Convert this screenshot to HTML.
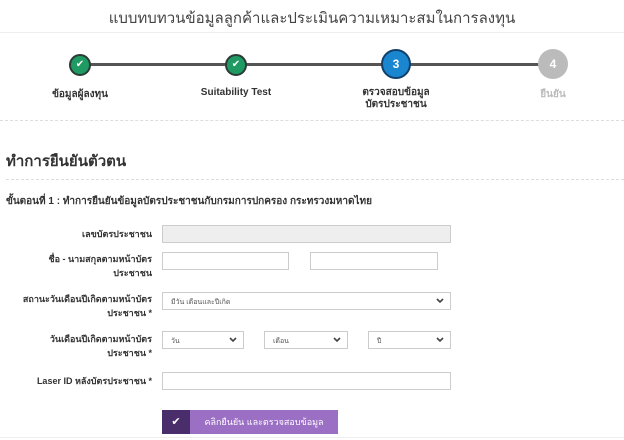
<!DOCTYPE html>
<html><head><meta charset="utf-8"><style>
*{box-sizing:border-box;margin:0;padding:0}
body{width:624px;height:440px;background:#fff;font-family:"Liberation Sans","DejaVu Sans",sans-serif;color:#333;position:relative;overflow:hidden}
.a{position:absolute}
.title{top:6px;left:0;width:624px;text-align:center;font-size:15px;color:#444}
.hdr{top:32px;left:0;width:624px;border-top:1px solid #eee}
.line{top:63px;left:80px;width:473px;height:3px;background:#555}
.c{border-radius:50%;color:#fff;font-weight:bold;text-align:center}
.lbl{font-size:9px;font-weight:bold;text-align:center;width:120px}
.dot{left:0;width:624px;border-top:1px dashed #ddd}
.fl{font-size:9px;font-weight:bold;text-align:right;width:140px;left:12px;line-height:14px}
.in{border:1px solid #ccc;background:#fff;height:18px}
.sel{font-size:7px;color:#555;padding:4px 8px}
.sel svg{position:absolute;right:6px;top:5px}
</style></head><body>
<div class="a title">แบบทบทวนข้อมูลลูกค้าและประเมินความเหมาะสมในการลงทุน</div>
<div class="a hdr"></div>
<div class="a line"></div>
<div class="a c" style="left:69px;top:54px;width:22px;height:22px;background:#1f9a63;border:2px solid #2b3b36;font-size:10px;line-height:18px">✔</div>
<div class="a c" style="left:225px;top:54px;width:22px;height:22px;background:#1f9a63;border:2px solid #2b3b36;font-size:10px;line-height:18px">✔</div>
<div class="a c" style="left:381px;top:49px;width:30px;height:30px;background:#1a86d0;border:2px solid #11406a;font-size:12px;line-height:26px">3</div>
<div class="a c" style="left:538px;top:49px;width:30px;height:30px;background:#bbb;font-size:12px;line-height:30px">4</div>
<div class="a lbl" style="left:20px;top:87px;font-size:10px">ข้อมูลผู้ลงทุน</div>
<div class="a lbl" style="left:176px;top:87px;font-size:10px">Suitability Test</div>
<div class="a lbl" style="left:336px;top:87px;line-height:12px;font-size:10px">ตรวจสอบข้อมูล<br>บัตรประชาชน</div>
<div class="a lbl" style="left:493px;top:87px;color:#bbb;font-size:10px">ยืนยัน</div>
<div class="a dot" style="top:120px"></div>
<div class="a" style="left:6px;top:149px;font-size:15px;font-weight:bold;color:#333">ทำการยืนยันตัวตน</div>
<div class="a dot" style="top:179px;left:6px;width:618px"></div>
<div class="a" style="left:6px;top:194px;font-size:10px;font-weight:bold">ขั้นตอนที่ 1 : ทำการยืนยันข้อมูลบัตรประชาชนกับกรมการปกครอง กระทรวงมหาดไทย</div>
<div class="a fl" style="top:227px">เลขบัตรประชาชน</div>
<div class="a in" style="left:162px;top:225px;width:289px;background:#eee"></div>
<div class="a fl" style="top:252px">ชื่อ - นามสกุลตามหน้าบัตร<br>ประชาชน</div>
<div class="a in" style="left:162px;top:252px;width:127px"></div>
<div class="a in" style="left:310px;top:252px;width:128px"></div>
<div class="a fl" style="top:292px">สถานะวันเดือนปีเกิดตามหน้าบัตร<br>ประชาชน *</div>
<div class="a in sel" style="left:162px;top:292px;width:289px">มีวัน เดือนและปีเกิด<svg width="8" height="6"><path d="M1 1l3 3 3-3" fill="none" stroke="#444" stroke-width="1.6"/></svg></div>
<div class="a fl" style="top:332px">วันเดือนปีเกิดตามหน้าบัตร<br>ประชาชน *</div>
<div class="a in sel" style="left:162px;top:331px;width:82px">วัน<svg width="8" height="6"><path d="M1 1l3 3 3-3" fill="none" stroke="#444" stroke-width="1.6"/></svg></div>
<div class="a in sel" style="left:264px;top:331px;width:84px">เดือน<svg width="8" height="6"><path d="M1 1l3 3 3-3" fill="none" stroke="#444" stroke-width="1.6"/></svg></div>
<div class="a in sel" style="left:368px;top:331px;width:83px">ปี<svg width="8" height="6"><path d="M1 1l3 3 3-3" fill="none" stroke="#444" stroke-width="1.6"/></svg></div>
<div class="a fl" style="top:374px">Laser ID หลังบัตรประชาชน *</div>
<div class="a in" style="left:162px;top:372px;width:289px"></div>
<div class="a" style="left:162px;top:410px;width:28px;height:24px;background:#4a2d6b;color:#fff;text-align:center;font-size:11px;line-height:24px">✔</div>
<div class="a" style="left:190px;top:410px;width:148px;height:24px;background:#9b6fc4;color:#fff;text-align:center;font-size:9px;line-height:24px">คลิกยืนยัน และตรวจสอบข้อมูล</div>
<div class="a" style="left:0;top:437px;width:624px;border-top:1px solid #eee"></div>
</body></html>
